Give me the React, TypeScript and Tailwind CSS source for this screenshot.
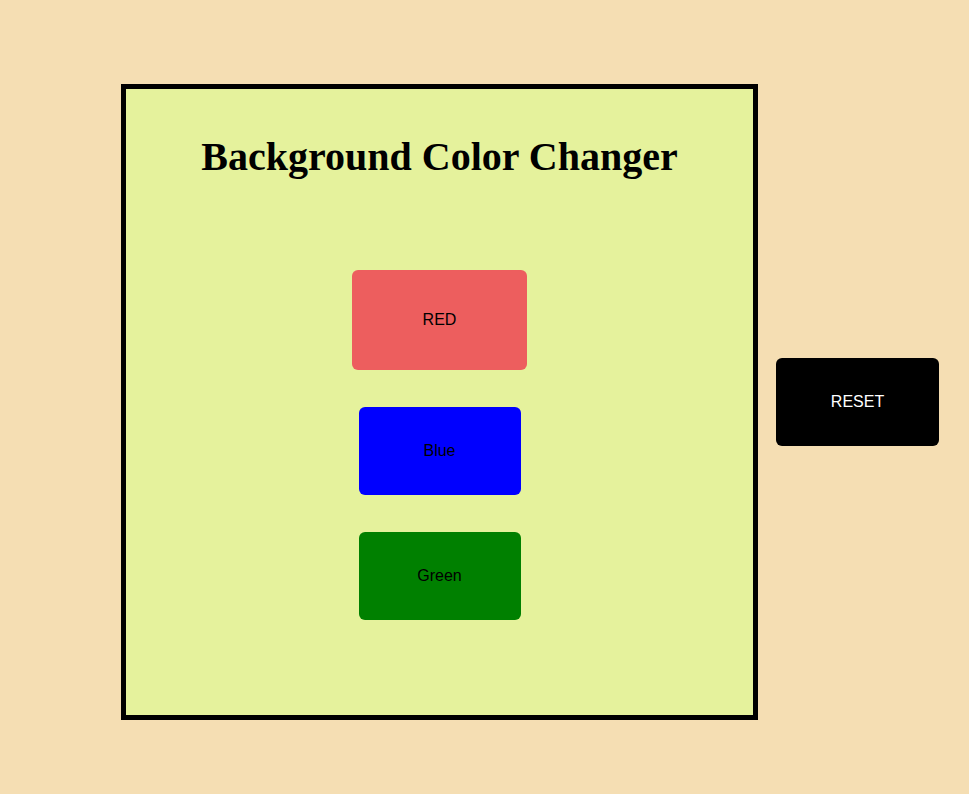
import { useState } from "react";

const DEFAULT_BG = "#e5f29c";

export default function App() {
  const [bg, setBg] = useState(DEFAULT_BG);

  return (
    <div className="min-h-screen w-full bg-[#f5deb3] pl-[121px] pt-[84px] font-['Liberation_Sans',Arial,sans-serif]">
      <div className="flex items-center">
        <div
          className="box-border flex h-[636px] w-[637px] flex-col items-center border-[5px] border-black"
          style={{ backgroundColor: bg }}
        >
          <h1 className="mt-[45px] text-[40px] font-bold leading-[46px] text-black font-['Liberation_Serif','Times_New_Roman',serif]">
            Background Color Changer
          </h1>

          <button
            onClick={() => setBg("#ed5e5e")}
            className="mt-[90px] h-[100px] w-[175px] rounded-md bg-[#ed5e5e] text-base text-black"
          >
            RED
          </button>
          <button
            onClick={() => setBg("#0000ff")}
            className="mt-[37px] h-[88px] w-[162px] rounded-md bg-[#0000ff] text-base text-black"
          >
            Blue
          </button>
          <button
            onClick={() => setBg("#008000")}
            className="mt-[37px] h-[88px] w-[162px] rounded-md bg-[#008000] text-base text-black"
          >
            Green
          </button>
        </div>

        <button
          onClick={() => setBg(DEFAULT_BG)}
          className="ml-[18px] h-[88px] w-[163px] rounded-md bg-black text-base text-white"
        >
          RESET
        </button>
      </div>
    </div>
  );
}
